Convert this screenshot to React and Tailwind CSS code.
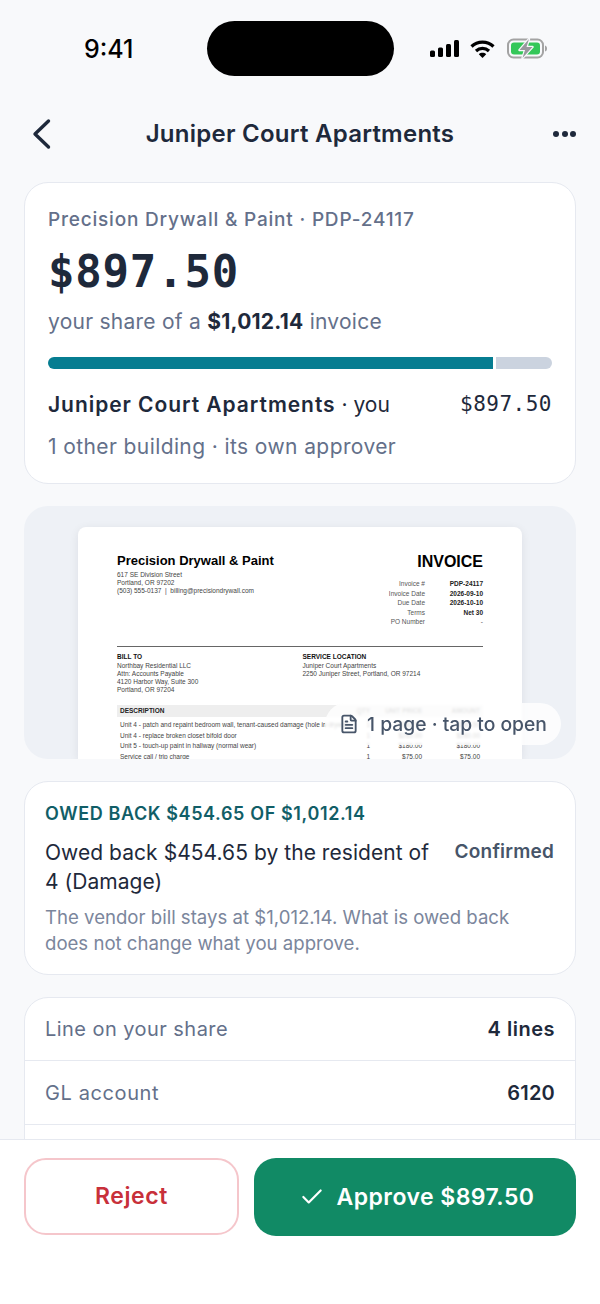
import { Check, FileText } from "lucide-react"

const sans = "font-['Inter','Noto_Sans',sans-serif]"
const mono = "font-['DejaVu_Sans_Mono','Liberation_Mono',monospace]"

function StatusIcons() {
    return (
        <div className="ml-[36px] flex items-center gap-[10px]">
            <svg width="30" height="17" viewBox="0 0 30 17" fill="#000">
                <rect x="0" y="10.5" width="5" height="6.5" rx="1.5" />
                <rect x="8" y="7.5" width="5" height="9.5" rx="1.5" />
                <rect x="16" y="4" width="5" height="13" rx="1.5" />
                <rect x="24" y="0" width="5" height="17" rx="1.5" />
            </svg>
            <svg width="25" height="18" viewBox="0 0 25 18" fill="none" stroke="#000" strokeWidth="3.2">
                <path d="M1.5 6.5 C7.5 0.7 17.5 0.7 23.5 6.5" />
                <path d="M6 11 C9.8 7.4 15.2 7.4 19 11" />
                <path d="M12.5 18 L8.8 14.2 C10.8 12.4 14.2 12.4 16.2 14.2 Z" fill="#000" stroke="none" />
            </svg>
            <svg width="41" height="21" viewBox="0 0 41 21" fill="none" className="ml-[2px]">
                <rect x="1" y="1.5" width="35" height="18" rx="5.5" stroke="#a3a3a3" strokeWidth="2" />
                <rect x="4" y="4.5" width="29" height="12" rx="3" fill="#34c759" />
                <path d="M38 7.5 C39.5 8 40 9 40 10.5 C40 12 39.5 13 38 13.5 Z" fill="#a3a3a3" />
                <path d="M22 1 L12.5 12 H18 L15.5 20 L25.5 9 H19.5 Z" fill="#f8f9fb" stroke="#f8f9fb" strokeWidth="2.4" strokeLinejoin="round" />
                <path d="M22 1 L12.5 12 H18 L15.5 20 L25.5 9 H19.5 Z" fill="#98989d" />
            </svg>
        </div>
    )
}

function InvoicePreview() {
    return (
        <div className="mx-[54px] mt-[21px] h-[232px] overflow-hidden rounded-t-[8px] bg-white px-[39px] pt-[27px] text-[#444] shadow-[0_2px_10px_rgba(15,23,42,0.08)] font-['Liberation_Sans',Arial,sans-serif] text-[6.5px] leading-[8px]">
            <div className="flex h-[91.5px] items-start justify-between">
                <div>
                    <div className="mb-[3px] text-[13px] leading-[14px] font-bold text-black">Precision Drywall &amp; Paint</div>
                    <div>617 SE Division Street</div>
                    <div>Portland, OR 97202</div>
                    <div>(503) 555-0137&nbsp; |&nbsp; billing@precisiondrywall.com</div>
                </div>
                <div className="flex flex-col items-end">
                    <div className="mb-[9px] text-[16px] leading-[16px] font-bold text-black">INVOICE</div>
                    <div className="grid grid-cols-[auto_58px] text-right leading-[9.6px] text-[#555]">
                        <span>Invoice #</span><b className="text-[#222]">PDP-24117</b>
                        <span>Invoice Date</span><b className="text-[#222]">2026-09-10</b>
                        <span>Due Date</span><b className="text-[#222]">2026-10-10</b>
                        <span>Terms</span><b className="text-[#222]">Net 30</b>
                        <span>PO Number</span><span>-</span>
                    </div>
                </div>
            </div>
            <div className="border-t-[1.5px] border-[#666] pt-[6.5px]">
                <div className="grid grid-cols-[185.5px_1fr]">
                    <div>
                        <div className="mb-[1px] font-bold text-[#111]">BILL TO</div>
                        <div>Northbay Residential LLC</div>
                        <div>Attn: Accounts Payable</div>
                        <div>4120 Harbor Way, Suite 300</div>
                        <div>Portland, OR 97204</div>
                    </div>
                    <div>
                        <div className="mb-[1px] font-bold text-[#111]">SERVICE LOCATION</div>
                        <div>Juniper Court Apartments</div>
                        <div>2250 Juniper Street, Portland, OR 97214</div>
                    </div>
                </div>
            </div>
            <div className="mt-[11px] grid h-[12px] grid-cols-[1fr_18px_52px_58px] items-center bg-[#eeeeee] px-[3px] font-bold text-[#222]">
                <span>DESCRIPTION</span>
                <span className="text-right text-[#888]">QTY</span>
                <span className="text-right text-[#888]">UNIT PRICE</span>
                <span className="text-right text-[#888]">AMOUNT</span>
            </div>
            {[
                ["Unit 4 - patch and repaint bedroom wall, tenant-caused damage (hole in drywall)", "$382.50", "$382.50"],
                ["Unit 4 - replace broken closet bifold door", "$260.00", "$260.00"],
                ["Unit 5 - touch-up paint in hallway (normal wear)", "$180.00", "$180.00"],
                ["Service call / trip charge", "$75.00", "$75.00"],
            ].map(([desc, price, amount], i) => (
                <div key={desc} className={`grid h-[10.6px] grid-cols-[1fr_18px_52px_58px] items-center px-[3px] ${i === 0 ? "mt-[3px]" : ""}`}>
                    <span className="whitespace-nowrap">{desc}</span>
                    <span className="text-right">1</span>
                    <span className="text-right">{price}</span>
                    <span className="text-right">{amount}</span>
                </div>
            ))}
        </div>
    )
}

export default function App() {
    return (
        <div className={`flex h-[1304px] w-[600px] flex-col overflow-hidden bg-[#f8f9fb] ${sans}`}>
            <div className="min-h-0 flex-1 overflow-hidden">
                <div className="flex h-[96px] items-center pl-[84px] pt-[1px]">
                    <span className="w-[123px] text-[25px] leading-[30px] font-medium text-black">9:41</span>
                    <div className="h-[55px] w-[187px] rounded-[28px] bg-black" />
                    <StatusIcons />
                </div>

                <div className="flex h-[76px] items-center justify-between px-[24px]">
                    <svg width="36" height="36" viewBox="0 0 36 36" fill="none" stroke="#1e293b" strokeWidth="3.4" strokeLinecap="round" strokeLinejoin="round">
                        <path d="M24.5 5 L11 18 L24.5 31" />
                    </svg>
                    <h1 className="text-[24px] font-semibold tracking-[0.25px] text-[#1e293b]">Juniper Court Apartments</h1>
                    <div className="flex w-[36px] justify-end gap-[2.5px]">
                        <span className="h-[6px] w-[6px] rounded-full bg-[#1e293b]" />
                        <span className="h-[6px] w-[6px] rounded-full bg-[#1e293b]" />
                        <span className="h-[6px] w-[6px] rounded-full bg-[#1e293b]" />
                    </div>
                </div>

                <div className="mt-[10px] flex flex-col gap-[22px] px-[24px]">
                    <section className="h-[302px] rounded-[24px] border-[1.5px] border-[#e6e9f0] bg-white px-[23px] pt-[23px]">
                        <p className="text-[19px] leading-[28px] font-medium tracking-[0.8px] text-[#64708a]">Precision Drywall &amp; Paint · PDP-24117</p>
                        <p className={`mt-[10px] text-[44px] leading-[56px] font-bold tracking-[0.8px] text-[#1e293b] ${mono}`}>$897.50</p>
                        <p className="mt-[7px] text-[21px] leading-[30px] tracking-[0.25px] text-[#64708a]">
                            your share of a <b className="font-bold text-[#1e293b]">$1,012.14</b> invoice
                        </p>
                        <div className="mt-[20px] flex h-[12px] gap-[3px]">
                            <div className="w-[445px] rounded-l-full bg-[#067d91]" />
                            <div className="flex-1 rounded-r-full bg-[#cbd3df]" />
                        </div>
                        <div className="mt-[20px] flex items-center justify-between text-[#1e293b]">
                            <p className="text-[21px] leading-[30px]"><b className="font-semibold tracking-[0.95px]">Juniper Court Apartments</b> · you</p>
                            <span className={`text-[21px] tracking-[0.5px] ${mono}`}>$897.50</span>
                        </div>
                        <p className="mt-[11px] text-[21px] leading-[30px] tracking-[0.4px] text-[#64708a]">1 other building · its own approver</p>
                    </section>

                    <section className="relative h-[253px] overflow-hidden rounded-[24px] bg-[#eef1f6]">
                        <InvoicePreview />
                        <div className="absolute top-[197px] left-[301px] flex h-[42px] w-[236px] items-center justify-center gap-[8px] rounded-full bg-white/80 text-[#475569] backdrop-blur-[1px]">
                            <FileText size={20} strokeWidth={2.2} />
                            <span className="text-[19.3px] font-medium">1 page · tap to open</span>
                        </div>
                    </section>

                    <section className="h-[194px] rounded-[24px] border-[1.5px] border-[#e6e9f0] bg-white px-[20px] pt-[19px]">
                        <p className="text-[18px] leading-[26px] font-semibold tracking-[0.62px] text-[#115e67]">OWED BACK $454.65 OF $1,012.14</p>
                        <div className="mt-[11px] flex items-start justify-between gap-[24px]">
                            <p className="text-[21px] leading-[29px] tracking-[0.05px] text-[#1e293b]">Owed back $454.65 by the resident of 4 (Damage)</p>
                            <span className="mt-[1px] mr-[1px] text-[19px] leading-[26px] font-semibold tracking-[0.2px] text-[#475569]">Confirmed</span>
                        </div>
                        <p className="mt-[8px] text-[18.6px] leading-[26px] text-[#7b869c]">The vendor bill stays at $1,012.14. What is owed back does not change what you approve.</p>
                    </section>

                    <section className="rounded-[24px] border-[1.5px] border-[#e6e9f0] bg-white text-[20px]">
                        <div className="flex h-[63px] items-center justify-between border-b-[1.5px] border-[#e6e9f0] px-[20px]">
                            <span className="tracking-[0.45px] text-[#64708a]">Line on your share</span>
                            <span className="font-semibold tracking-[0.5px] text-[#1e293b]">4 lines</span>
                        </div>
                        <div className="flex h-[64px] items-center justify-between border-b-[1.5px] border-[#e6e9f0] px-[20px]">
                            <span className="tracking-[0.6px] text-[#64708a]">GL account</span>
                            <span className="font-semibold tracking-[0.2px] text-[#1e293b]">6120</span>
                        </div>
                        <div className="h-[64px]" />
                    </section>
                </div>
            </div>

            <div className="flex h-[165px] shrink-0 gap-[15px] border-t-[1.5px] border-[#e6e9f0] bg-white px-[24px] pt-[18px]">
                <button type="button" className="h-[77px] w-[215px] rounded-[22px] border-2 border-[#f5c6cb] text-[23px] font-semibold tracking-[0.6px] text-[#c8303a]">
                    Reject
                </button>
                <button type="button" className="flex h-[78px] flex-1 items-center justify-center gap-[12px] rounded-[22px] bg-[#118a65] pl-[3px] text-[23px] font-semibold tracking-[0.45px] text-white">
                    <Check size={26} strokeWidth={2} />
                    Approve $897.50
                </button>
            </div>
        </div>
    )
}
